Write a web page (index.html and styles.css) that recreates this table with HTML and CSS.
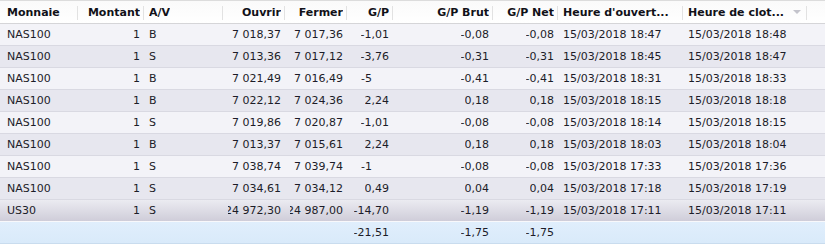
FILE: index.html
```html
<!DOCTYPE html>
<html lang="fr">
<head>
<meta charset="utf-8">
<title>Positions</title>
<link rel="stylesheet" href="styles.css">
</head>
<body>
<div class="grid">
  <div class="row head">
    <div class="c l first"><span>Monnaie</span></div>
    <div class="c r"><span>Montant</span></div>
    <div class="c l"><span>A/V</span></div>
    <div class="c r"><span>Ouvrir</span></div>
    <div class="c r"><span>Fermer</span></div>
    <div class="c r"><span>G/P</span></div>
    <div class="c r"><span>G/P Brut</span></div>
    <div class="c r"><span>G/P Net</span></div>
    <div class="c l"><span>Heure d'ouvert...</span></div>
    <div class="c l sort"><span>Heure de clot...</span><i class="arrow"></i></div>
    <div class="c filler"></div>
  </div>

  <div class="row odd">
    <div class="c l first"><span>NAS100</span></div><div class="c r"><span>1</span></div><div class="c l"><span>B</span></div>
    <div class="c r"><span>7 018,37</span></div><div class="c r"><span>7 017,36</span></div><div class="c r"><span>-1,01</span></div>
    <div class="c r"><span>-0,08</span></div><div class="c r"><span>-0,08</span></div>
    <div class="c l"><span>15/03/2018 18:47</span></div><div class="c l"><span>15/03/2018 18:48</span></div><div class="c filler"></div>
  </div>
  <div class="row even">
    <div class="c l first"><span>NAS100</span></div><div class="c r"><span>1</span></div><div class="c l"><span>S</span></div>
    <div class="c r"><span>7 013,36</span></div><div class="c r"><span>7 017,12</span></div><div class="c r"><span>-3,76</span></div>
    <div class="c r"><span>-0,31</span></div><div class="c r"><span>-0,31</span></div>
    <div class="c l"><span>15/03/2018 18:45</span></div><div class="c l"><span>15/03/2018 18:47</span></div><div class="c filler"></div>
  </div>
  <div class="row odd">
    <div class="c l first"><span>NAS100</span></div><div class="c r"><span>1</span></div><div class="c l"><span>B</span></div>
    <div class="c r"><span>7 021,49</span></div><div class="c r"><span>7 016,49</span></div><div class="c r short"><span>-5</span></div>
    <div class="c r"><span>-0,41</span></div><div class="c r"><span>-0,41</span></div>
    <div class="c l"><span>15/03/2018 18:31</span></div><div class="c l"><span>15/03/2018 18:33</span></div><div class="c filler"></div>
  </div>
  <div class="row even">
    <div class="c l first"><span>NAS100</span></div><div class="c r"><span>1</span></div><div class="c l"><span>B</span></div>
    <div class="c r"><span>7 022,12</span></div><div class="c r"><span>7 024,36</span></div><div class="c r"><span>2,24</span></div>
    <div class="c r"><span>0,18</span></div><div class="c r"><span>0,18</span></div>
    <div class="c l"><span>15/03/2018 18:15</span></div><div class="c l"><span>15/03/2018 18:18</span></div><div class="c filler"></div>
  </div>
  <div class="row odd">
    <div class="c l first"><span>NAS100</span></div><div class="c r"><span>1</span></div><div class="c l"><span>S</span></div>
    <div class="c r"><span>7 019,86</span></div><div class="c r"><span>7 020,87</span></div><div class="c r"><span>-1,01</span></div>
    <div class="c r"><span>-0,08</span></div><div class="c r"><span>-0,08</span></div>
    <div class="c l"><span>15/03/2018 18:14</span></div><div class="c l"><span>15/03/2018 18:15</span></div><div class="c filler"></div>
  </div>
  <div class="row even">
    <div class="c l first"><span>NAS100</span></div><div class="c r"><span>1</span></div><div class="c l"><span>B</span></div>
    <div class="c r"><span>7 013,37</span></div><div class="c r"><span>7 015,61</span></div><div class="c r"><span>2,24</span></div>
    <div class="c r"><span>0,18</span></div><div class="c r"><span>0,18</span></div>
    <div class="c l"><span>15/03/2018 18:03</span></div><div class="c l"><span>15/03/2018 18:04</span></div><div class="c filler"></div>
  </div>
  <div class="row odd">
    <div class="c l first"><span>NAS100</span></div><div class="c r"><span>1</span></div><div class="c l"><span>S</span></div>
    <div class="c r"><span>7 038,74</span></div><div class="c r"><span>7 039,74</span></div><div class="c r short"><span>-1</span></div>
    <div class="c r"><span>-0,08</span></div><div class="c r"><span>-0,08</span></div>
    <div class="c l"><span>15/03/2018 17:33</span></div><div class="c l"><span>15/03/2018 17:36</span></div><div class="c filler"></div>
  </div>
  <div class="row even">
    <div class="c l first"><span>NAS100</span></div><div class="c r"><span>1</span></div><div class="c l"><span>S</span></div>
    <div class="c r"><span>7 034,61</span></div><div class="c r"><span>7 034,12</span></div><div class="c r"><span>0,49</span></div>
    <div class="c r"><span>0,04</span></div><div class="c r"><span>0,04</span></div>
    <div class="c l"><span>15/03/2018 17:18</span></div><div class="c l"><span>15/03/2018 17:19</span></div><div class="c filler"></div>
  </div>
  <div class="row selected">
    <div class="c l first"><span>US30</span></div><div class="c r"><span>1</span></div><div class="c l"><span>S</span></div>
    <div class="c r"><span>24 972,30</span></div><div class="c r"><span>24 987,00</span></div><div class="c r"><span>-14,70</span></div>
    <div class="c r"><span>-1,19</span></div><div class="c r"><span>-1,19</span></div>
    <div class="c l"><span>15/03/2018 17:11</span></div><div class="c l"><span>15/03/2018 17:11</span></div><div class="c filler"></div>
  </div>

  <div class="row total">
    <div class="c l first"></div><div class="c r"></div><div class="c l"></div>
    <div class="c r"></div><div class="c r"></div><div class="c r"><span>-21,51</span></div>
    <div class="c r"><span>-1,75</span></div><div class="c r"><span>-1,75</span></div>
    <div class="c l"></div><div class="c l"></div><div class="c filler"></div>
  </div>
</div>
</body>
</html>
```

FILE: styles.css
```css
html, body {
  margin: 0;
  padding: 0;
  background: #ffffff;
}

body {
  font-family: "DejaVu Sans", Verdana, sans-serif;
  font-size: 11px;
  color: #1c1c28;
  width: 825px;
  height: 244px;
  overflow: hidden;
}

.grid {
  display: flex;
  flex-direction: column;
}

.row {
  display: grid;
  grid-template-columns: 78px 66px 79px 62px 62px 46px 100px 65px 125px 124px 18px;
  height: 22px;
  box-sizing: border-box;
}

.c {
  display: flex;
  align-items: center;
  padding: 0 4px 0 5px;
  min-width: 0;
  overflow: hidden;
  white-space: nowrap;
}

.c span {
  display: flex;
  min-width: 0;
  overflow: hidden;
}

.c.r,
.c.r span {
  justify-content: flex-end;
}

.c.short {
  padding-right: 21px;
}

.c.first {
  padding-left: 7px;
}

.head {
  height: 24px;
  background: linear-gradient(#fafafa, #ffffff);
  border-top: 1px solid #dcdcdc;
  border-bottom: 1px solid #d5d5d8;
  font-weight: bold;
  color: #111118;
}

.head .c {
  position: relative;
}

.head .c::after {
  content: "";
  position: absolute;
  right: 0;
  top: 5px;
  bottom: 3px;
  width: 1px;
  background: #e2e2e2;
}

.head .c.filler::after {
  display: none;
}

.arrow {
  position: absolute;
  right: 6px;
  top: 9px;
  width: 0;
  height: 0;
  border-left: 4px solid transparent;
  border-right: 4px solid transparent;
  border-top: 4px solid #c4c4cc;
}

.odd {
  background: #f3f3f8;
  border-bottom: 1px solid #d9d9e2;
}

.even {
  background: #e7e7ef;
  border-bottom: 1px solid #d9d9e2;
}

.selected {
  background: linear-gradient(#ebebf1, #cfcdd9);
  border-bottom: 1px solid #f8f8fb;
}

.total {
  background: linear-gradient(#e0eefc, #d9eafa);
  border-bottom: 1px solid #c9dcee;
}
```
